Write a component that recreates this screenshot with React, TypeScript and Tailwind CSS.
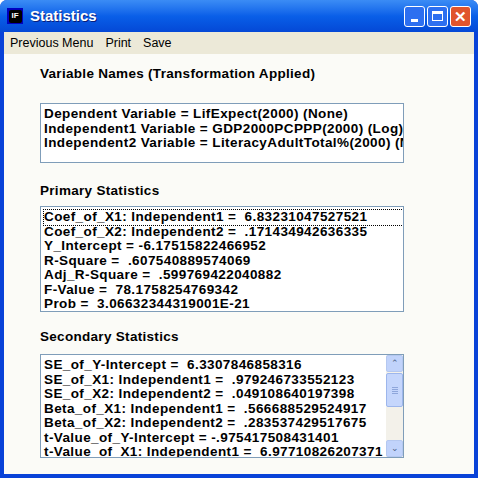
import React from "react";

const f = { fontFamily: '"Liberation Sans", Arial, sans-serif' };

function Box({ lines, h, focus, scroll }: { lines: string[]; h: string; focus?: boolean; scroll?: boolean }) {
  return (
    <div className={`ml-[40px] w-[364px] ${h} border border-[#7f9db9] bg-white flex overflow-hidden`}>
      <div className="flex-1 pt-[3px] pl-[3px] overflow-hidden">
        {lines.map((l, i) => (
          <div key={i} className={`h-[14.5px] leading-[14px] text-[13.5px] tracking-[0.4px] font-bold whitespace-pre text-black ${focus && i === 0 ? "outline outline-1 outline-dotted outline-black" : ""}`}>
            {l}
          </div>
        ))}
      </div>
      {scroll && (
        <div className="w-[17px] bg-[#f3f1ea] flex flex-col">
          <div className="h-[17px] rounded-[2px] bg-[#c1d3fb] border border-[#b5c8f0] flex items-center justify-center text-[#4d6185] text-[9px]">⌃</div>
          <div className="h-[34px] mt-[1px] rounded-[2px] bg-[#c5d6fc] border border-[#9db6ec] flex flex-col items-center justify-center gap-[1px]">
            <div className="w-[6px] h-px bg-[#8ea6db]" /><div className="w-[6px] h-px bg-[#8ea6db]" /><div className="w-[6px] h-px bg-[#8ea6db]" /><div className="w-[6px] h-px bg-[#8ea6db]" />
          </div>
          <div className="flex-1" />
          <div className="h-[17px] rounded-[2px] bg-[#c1d3fb] border border-[#b5c8f0] flex items-center justify-center text-[#4d6185] text-[9px]">⌄</div>
        </div>
      )}
    </div>
  );
}

const label = "h-[26px] ml-[36px] text-[13.5px] tracking-[0.3px] font-bold flex items-center";

export default function App() {
  return (
    <div style={f} className="w-[478px] h-[478px] bg-[#0842d8] flex flex-col rounded-t-[7px] overflow-hidden">
      <div className="h-[32px] bg-gradient-to-b from-[#3b8cf5] via-[#0a5fe8] to-[#0548d6] flex items-center px-[7px]">
        <div className="w-[16px] h-[16px] bg-[#0000c0] flex items-center justify-center">
          <div className="w-[13px] h-[13px] bg-black rounded-[2px] text-white text-[8px] font-bold flex items-center justify-center">IF</div>
        </div>
        <span className="ml-[7px] text-white font-bold text-[15px] [text-shadow:1px_1px_#0a1e7a]">Statistics</span>
        <div className="flex-1" />
        <div className="flex gap-[2px]">
          <div className="w-[21px] h-[21px] rounded-[3px] border border-white bg-[#2d6ff0] flex items-end justify-center pb-[4px]"><div className="w-[7px] h-[3px] bg-white" /></div>
          <div className="w-[21px] h-[21px] rounded-[3px] border border-white bg-[#2d6ff0] flex items-center justify-center"><div className="w-[11px] h-[10px] border border-white border-t-[3px]" /></div>
          <div className="w-[21px] h-[21px] rounded-[3px] border border-white bg-[#e0542c] flex items-center justify-center text-white font-bold text-[15px] leading-none">✕</div>
        </div>
      </div>
      <div className="flex-1 mx-[4px] mb-[4px] bg-[#fbfbf7] flex flex-col">
        <div className="h-[22px] bg-[#ece9d8] flex items-center gap-[12px] px-[6px] text-[12.5px] text-black">
          <span>Previous Menu</span><span>Print</span><span>Save</span>
        </div>
        <div className={`${label} mt-[7px]`}>Variable Names (Transformation Applied)</div>
        <div className="h-[16px]" />
        <div className="-ml-[4px]">
          <Box h="h-[60px]" lines={["Dependent Variable = LifExpect(2000) (None)", "Independent1 Variable = GDP2000PCPPP(2000) (Log)", "Independent2 Variable = LiteracyAdultTotal%(2000) (None)"]} />
        </div>
        <div className={`${label} mt-[15px]`}>Primary Statistics</div>
        <div className="-ml-[4px] mt-[2px]">
          <Box h="h-[106px]" focus lines={["Coef_of_X1: Independent1 =  6.83231047527521", "Coef_of_X2: Independent2 =  .171434942636335", "Y_Intercept = -6.17515822466952", "R-Square =  .607540889574069", "Adj_R-Square =  .599769422040882", "F-Value =  78.1758254769342", "Prob =  3.06632344319001E-21"]} />
        </div>
        <div className={`${label} mt-[12px]`}>Secondary Statistics</div>
        <div className="-ml-[4px] mt-[4px]">
          <Box h="h-[104px]" scroll lines={["SE_of_Y-Intercept =  6.3307846858316", "SE_of_X1: Independent1 =  .979246733552123", "SE_of_X2: Independent2 =  .049108640197398", "Beta_of_X1: Independent1 =  .566688529524917", "Beta_of_X2: Independent2 =  .283537429517675", "t-Value_of_Y-Intercept = -.975417508431401", "t-Value_of_X1: Independent1 =  6.97710826207371"]} />
        </div>
      </div>
    </div>
  );
}
